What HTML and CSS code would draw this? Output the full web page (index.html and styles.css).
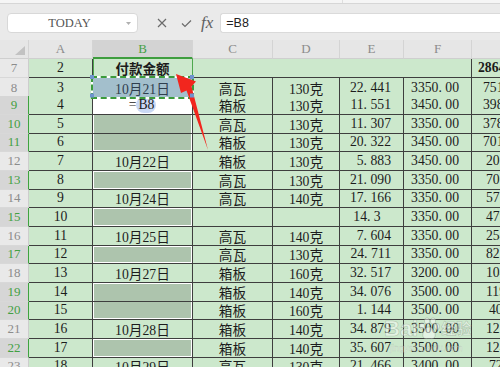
FILE: index.html
```html
<!DOCTYPE html>
<html>
<head>
<meta charset="utf-8">
<link rel="stylesheet" href="styles.css">
</head>
<body>
<div class="top"><div class="topsep"></div></div>
<div class="fbar">
  <div class="namebox"><span class="nm">TODAY</span><span class="dd"><svg width="5" height="3" viewBox="0 0 5 3"><polygon points="0,0 5,0 2.5,3" fill="#b0b0b0"/></svg></span></div>
  <div class="ficons">
    <svg class="ico" width="10" height="10" viewBox="0 0 10 10"><path d="M1 1L9 9M9 1L1 9" stroke="#6b6b6b" stroke-width="1.2" fill="none"/></svg>
    <svg class="ico ok" width="11" height="9" viewBox="0 0 11 9"><path d="M1 4.5L4 7.5L10 1.5" stroke="#6b6b6b" stroke-width="1.2" fill="none"/></svg>
    <span class="fx">fx</span>
  </div>
  <div class="finput">=B8</div>
</div>
<div class="sheet">
  <div class="row hdr">
    <div class="corner"><svg width="10" height="9" viewBox="0 0 10 9"><polygon points="10,0 10,9 0,9" fill="#c2c2c2"/></svg></div>
    <div class="ch">A</div><div class="ch s">B</div><div class="ch">C</div><div class="ch">D</div><div class="ch">E</div><div class="ch">F</div><div class="ch"></div>
  </div>
  <div class="row">
    <div class="rh">7</div><div class="c">2</div><div class="c b7">付款金额</div><div class="c span4"></div><div class="c g g0 bold">286421<span class="p">.</span>35</div>
  </div>
  <div class="row">
    <div class="rh">8</div><div class="c">3</div><div class="c mq">10月21日<span class="hd"></span></div><div class="c">高瓦</div><div class="c">130克</div><div class="c r">22<span class="p">.</span>441</div><div class="c f">3350<span class="p">.</span>00</div><div class="c g g1">75177<span class="p">.</span>35</div>
  </div>
  <div class="row">
    <div class="rh s">9</div><div class="c">4</div><div class="c act">=<span class="ref">B8</span></div><div class="c">箱板</div><div class="c">130克</div><div class="c r">11<span class="p">.</span>551</div><div class="c f">3450<span class="p">.</span>00</div><div class="c g g1">39850<span class="p">.</span>95</div>
  </div>
  <div class="row">
    <div class="rh s">10</div><div class="c">5</div><div class="c sel"></div><div class="c">高瓦</div><div class="c">130克</div><div class="c r">11<span class="p">.</span>307</div><div class="c f">3350<span class="p">.</span>00</div><div class="c g g1">37878<span class="p">.</span>45</div>
  </div>
  <div class="row">
    <div class="rh s">11</div><div class="c">6</div><div class="c sel sb"></div><div class="c">箱板</div><div class="c">130克</div><div class="c r">20<span class="p">.</span>322</div><div class="c f">3450<span class="p">.</span>00</div><div class="c g g1">70110<span class="p">.</span>90</div>
  </div>
  <div class="row">
    <div class="rh">12</div><div class="c">7</div><div class="c">10月22日</div><div class="c">箱板</div><div class="c">130克</div><div class="c r">5<span class="p">.</span>883</div><div class="c f">3450<span class="p">.</span>00</div><div class="c g">20296<span class="p">.</span>35</div>
  </div>
  <div class="row">
    <div class="rh s">13</div><div class="c">8</div><div class="c sel st sb"></div><div class="c">高瓦</div><div class="c">130克</div><div class="c r">21<span class="p">.</span>090</div><div class="c f">3350<span class="p">.</span>00</div><div class="c g">70651<span class="p">.</span>50</div>
  </div>
  <div class="row">
    <div class="rh">14</div><div class="c">9</div><div class="c">10月24日</div><div class="c">高瓦</div><div class="c">140克</div><div class="c r">17<span class="p">.</span>166</div><div class="c f">3350<span class="p">.</span>00</div><div class="c g">57506<span class="p">.</span>10</div>
  </div>
  <div class="row">
    <div class="rh s">15</div><div class="c">10</div><div class="c sel st sb"></div><div class="c"></div><div class="c"></div><div class="c r e143">14<span class="p">.</span>3</div><div class="c f">3350<span class="p">.</span>00</div><div class="c g">47905<span class="p">.</span>00</div>
  </div>
  <div class="row">
    <div class="rh">16</div><div class="c">11</div><div class="c">10月25日</div><div class="c">高瓦</div><div class="c">140克</div><div class="c r">7<span class="p">.</span>604</div><div class="c f">3350<span class="p">.</span>00</div><div class="c g">25473<span class="p">.</span>40</div>
  </div>
  <div class="row">
    <div class="rh s">17</div><div class="c">12</div><div class="c sel st sb"></div><div class="c">高瓦</div><div class="c">130克</div><div class="c r">24<span class="p">.</span>711</div><div class="c f">3350<span class="p">.</span>00</div><div class="c g">82781<span class="p">.</span>85</div>
  </div>
  <div class="row">
    <div class="rh">18</div><div class="c">13</div><div class="c">10月27日</div><div class="c">箱板</div><div class="c">160克</div><div class="c r">32<span class="p">.</span>517</div><div class="c f">3200<span class="p">.</span>00</div><div class="c g">104054<span class="p">.</span>40</div>
  </div>
  <div class="row">
    <div class="rh s">19</div><div class="c">14</div><div class="c sel st"></div><div class="c">箱板</div><div class="c">140克</div><div class="c r">34<span class="p">.</span>076</div><div class="c f">3500<span class="p">.</span>00</div><div class="c g">119266<span class="p">.</span>00</div>
  </div>
  <div class="row">
    <div class="rh s">20</div><div class="c">15</div><div class="c sel sb"></div><div class="c">箱板</div><div class="c">160克</div><div class="c r">1<span class="p">.</span>144</div><div class="c f">3500<span class="p">.</span>00</div><div class="c g g2">4004<span class="p">.</span>00</div>
  </div>
  <div class="row">
    <div class="rh">21</div><div class="c">16</div><div class="c">10月28日</div><div class="c">箱板</div><div class="c">140克</div><div class="c r">34<span class="p">.</span>879</div><div class="c f">3500<span class="p">.</span>00</div><div class="c g">122076<span class="p">.</span>50</div>
  </div>
  <div class="row">
    <div class="rh s">22</div><div class="c">17</div><div class="c sel st sb"></div><div class="c">箱板</div><div class="c">140克</div><div class="c r">35<span class="p">.</span>607</div><div class="c f">3500<span class="p">.</span>00</div><div class="c g">124624<span class="p">.</span>50</div>
  </div>
  <div class="row">
    <div class="rh">23</div><div class="c">18</div><div class="c">10月29日</div><div class="c">高瓦</div><div class="c">130克</div><div class="c r">21<span class="p">.</span>466</div><div class="c f">3400<span class="p">.</span>00</div><div class="c g g2">72984<span class="p">.</span>40</div>
  </div>
</div>
<div class="wm">
  <span class="wm1">Bai</span><svg class="paw" width="22" height="24" viewBox="0 0 22 24"><g fill="rgba(255,255,255,0.45)" stroke="rgba(120,140,120,0.4)" stroke-width="0.8"><ellipse cx="4" cy="9" rx="2.6" ry="3.2"/><ellipse cx="9" cy="4" rx="2.6" ry="3.2"/><ellipse cx="15" cy="4" rx="2.6" ry="3.2"/><ellipse cx="19" cy="9.5" rx="2.6" ry="3.2"/><path d="M11 10C7 10 4 16 5 19.5C6 22.5 9 21.5 11 21.5C13 21.5 16 22.5 17 19.5C18 16 15 10 11 10Z"/></g></svg><span class="wm2">经验</span>
  <div class="wm3">jingyan.baidu.com</div>
</div>
<svg class="arrow" width="500" height="367" viewBox="0 0 500 367">
  <polygon points="176,74 196,81.5 191.5,86.5 208,150 186.5,90.5 181,93" fill="#f2261e"/>
</svg>
</body>
</html>
```

FILE: styles.css
```css
* { box-sizing: border-box; margin: 0; padding: 0; }
html, body { width: 500px; height: 367px; overflow: hidden; }
body {
  margin: 0;
  background: #e9e9e9;
  font-family: "Liberation Serif", "Noto Sans CJK SC", serif;
  position: relative;
}
.top {
  height: 4px;
  background: #f5f5f5;
  border-bottom: 1px solid #d6d6d6;
  position: relative;
}
.topsep {
  position: absolute;
  left: 342px;
  top: 0;
  width: 1px;
  height: 3px;
  background: #dedede;
}
.fbar {
  height: 36px;
  display: flex;
  align-items: flex-start;
  padding: 9px 0 0 7px;
  background: #eaeaea;
}
.namebox {
  width: 131px;
  height: 20px;
  background: #fff;
  border: 1px solid #d8d8d8;
  border-radius: 4px;
  display: flex;
  align-items: center;
}
.nm {
  flex: 1;
  text-align: center;
  font-size: 12.5px;
  color: #555;
  padding-left: 6px;
}
.dd {
  width: 12px;
  display: flex;
  align-items: center;
  padding-left: 1px;
}
.ficons {
  display: flex;
  align-items: center;
  height: 20px;
  padding-left: 19px;
  gap: 13px;
}
.ico.ok { margin-left: 1px; }
.fx {
  font-style: italic;
  font-size: 17px;
  color: #606060;
  line-height: 20px;
  margin-left: -4px;
}
.finput {
  flex: 1;
  margin-left: 7px;
  height: 20px;
  background: #fff;
  border: 1px solid #dadada;
  border-right: none;
  border-radius: 3px 0 0 3px;
  font-family: "Liberation Sans", "Noto Sans CJK SC", sans-serif;
  font-size: 12.5px;
  line-height: 18px;
  padding-left: 5px;
  color: #222;
}
.sheet { width: 672px; }
.row {
  display: grid;
  grid-template-columns: 29px 64px 100px 80px 67px 64px 68px 200px;
  height: 18.67px;
}
.row.hdr { height: 19px; }
.corner {
  background: #e6e6e6;
  border-right: 1px solid #d4d4d4;
  border-bottom: 1px solid #cfcfcf;
  display: flex;
  align-items: flex-end;
  justify-content: flex-end;
  padding: 0 3px 3px 0;
}
.ch {
  background: #e6e6e6;
  border-right: 1px solid #d4d4d4;
  border-bottom: 1px solid #cfcfcf;
  color: #8c8c8c;
  font-size: 13px;
  display: flex;
  align-items: center;
  justify-content: center;
}
.ch.s {
  background: #d3d3d3;
  color: #45a045;
  border-bottom: 2px solid #3e9d3e;
}
.rh {
  background: #e9e9e9;
  border-right: 1px solid #cdcdcd;
  border-bottom: 1px solid #d8d8d8;
  color: #8c8c8c;
  font-size: 13px;
  display: flex;
  align-items: center;
  justify-content: center;
}
.rh.s {
  background: #d6d6d6;
  color: #43a043;
  border-right: 1px solid #3fa33f;
}
.c {
  background: #cce8cc;
  border-right: 1px solid #3e3e3e;
  border-bottom: 1px solid #3e3e3e;
  display: flex;
  align-items: center;
  justify-content: center;
  white-space: nowrap;
  overflow: hidden;
  font-size: 13.7px;
  color: #1c1c1c;
}
.p { letter-spacing: 0.25em; }
.r { justify-content: flex-end; padding-right: 12px; }
.e143 { justify-content: center; padding-right: 9px; }
.f { justify-content: flex-end; padding-right: 12px; }
.g { justify-content: flex-start; padding-left: 14px; border-right: none; }
.g0 { padding-left: 6px; }
.g1 { padding-left: 11px; }
.g2 { padding-left: 17px; }
.bold { font-weight: bold; }
.span4 { grid-column: span 4; border-right-color: #3e3e3e; }
.b7 {
  font-weight: bold;
  font-family: "Noto Sans CJK SC", sans-serif;
  font-size: 13.5px;
  box-shadow: inset 1px 0 #4ea84e;
  border-right-color: #4ea84e;
}
.mq {
  background: #a3bfcc;
  color: #2f3e4e;
  position: relative;
  overflow: visible;
}
.mq::before {
  content: "";
  position: absolute;
  left: -2px; top: -2px; right: -2px; bottom: -1px;
  border: 2px solid #fff;
}
.mq::after {
  content: "";
  position: absolute;
  left: -2px; top: -2px; right: -2px; bottom: -1px;
  border: 2px dashed #3b9b3b;
}
.hd {
  position: absolute;
  left: -3px;
  top: -3px;
  width: 4px;
  height: 4px;
  background: #6f93cf;
  z-index: 2;
  box-shadow: 100px 0 #6f93cf, 0 18.5px #6f93cf, 100px 18.5px #6f93cf;
}
.act {
  background: #fff;
  box-shadow: inset 1px 0 #fff, inset -1px 0 #fff;
}
.ref {
  background: #c9d8f4;
  border-radius: 8px;
  padding: 0 2px;
  line-height: 16px;
}
.sel {
  background: #adc4ad;
  box-shadow: inset 1px 0 #fff, inset -1px 0 #fff;
}
.sel.st { box-shadow: inset 1px 0 #fff, inset -1px 0 #fff, inset 0 1px #fff; }
.sel.sb { box-shadow: inset 1px 0 #fff, inset -1px 0 #fff, inset 0 -1px #fff; }
.sel.st.sb { box-shadow: inset 0 0 0 1px #fff; }
.arrow {
  position: absolute;
  left: 0;
  top: 0;
  pointer-events: none;
}
.wm {
  position: absolute;
  left: 384px;
  top: 316px;
  width: 100px;
  pointer-events: none;
}
.wm1, .wm2 {
  font-family: "Liberation Sans", "Noto Sans CJK SC", sans-serif;
  font-weight: bold;
  font-size: 22px;
  color: rgba(255, 255, 255, 0.45);
  -webkit-text-stroke: 0.6px rgba(110, 130, 110, 0.4);
  line-height: 26px;
  vertical-align: top;
}
.wm2 { font-size: 15px; margin-left: 1px; }
.paw { vertical-align: top; margin-top: 1px; }
.wm3 {
  font-family: "Liberation Sans", sans-serif;
  font-size: 9px;
  color: rgba(255, 255, 255, 0.5);
  -webkit-text-stroke: 0.3px rgba(110, 130, 110, 0.35);
  padding-left: 6px;
  margin-top: 1px;
}
```
